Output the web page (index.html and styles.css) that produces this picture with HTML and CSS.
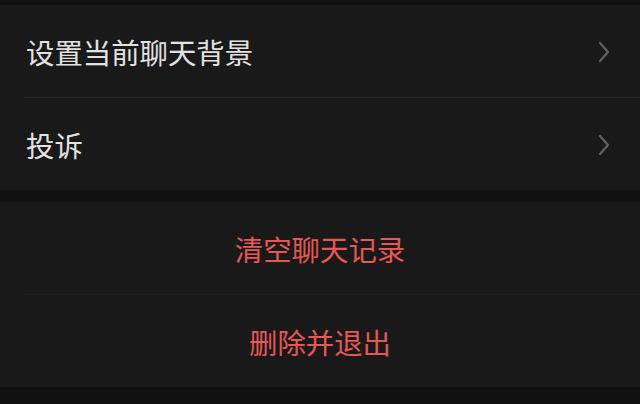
FILE: index.html
```html
<!DOCTYPE html>
<html lang="zh-CN">
<head>
<meta charset="utf-8">
<link rel="stylesheet" href="styles.css">
</head>
<body>
<div class="page">
  <div class="group">
    <div class="row">
      <span class="label">设置当前聊天背景</span>
      <svg class="chev" width="12" height="22" viewBox="0 0 12 22"><polyline points="2,2 10,11 2,20" fill="none" stroke="#626262" stroke-width="2.2" stroke-linecap="round" stroke-linejoin="round"/></svg>
    </div>
    <div class="sep"></div>
    <div class="row">
      <span class="label">投诉</span>
      <svg class="chev" width="12" height="22" viewBox="0 0 12 22"><polyline points="2,2 10,11 2,20" fill="none" stroke="#626262" stroke-width="2.2" stroke-linecap="round" stroke-linejoin="round"/></svg>
    </div>
  </div>
  <div class="group">
    <div class="row center"><span class="danger">清空聊天记录</span></div>
    <div class="sep faint"></div>
    <div class="row center"><span class="danger">删除并退出</span></div>
  </div>
</div>
</body>
</html>
```

FILE: styles.css
```css
html, body {
  margin: 0;
  padding: 0;
  background: #111111;
  font-family: "Noto Sans CJK SC", "Noto Sans", sans-serif;
}
.page {
  width: 640px;
  height: 404px;
  padding-top: 5px;
  box-sizing: border-box;
  display: flex;
  flex-direction: column;
  gap: 12px;
}
.group {
  background: #191919;
}
.row {
  height: 92px;
  display: flex;
  align-items: center;
  justify-content: space-between;
  padding: 2px 30px 0 26px;
  box-sizing: border-box;
}
.row.center {
  justify-content: center;
  padding: 2px 0 0 0;
}
.label {
  font-size: 28.4px;
  font-weight: 400;
  color: #e2e2e2;
  line-height: 1;
}
.danger {
  font-size: 28.4px;
  font-weight: 400;
  color: #e45855;
  line-height: 1;
}
.chev {
  display: block;
}
.sep {
  height: 1px;
  margin-left: 24px;
  background: #232323;
}
.sep.faint {
  background: #1d1d1d;
}
```
